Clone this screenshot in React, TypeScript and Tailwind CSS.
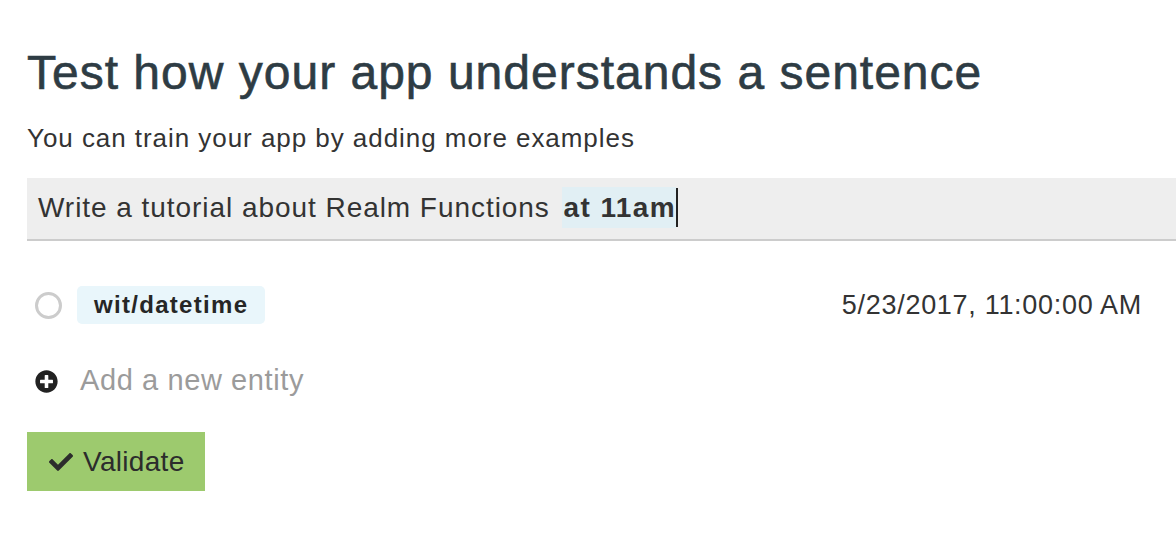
import React from "react";
import { FaCheck, FaPlusCircle } from "react-icons/fa";

export default function App() {
  return (
    <div
      className="w-[1176px] h-[534px] overflow-hidden bg-white pl-[27px] pt-[45px]"
      style={{ fontFamily: '"Liberation Sans", Arial, Helvetica, sans-serif' }}
    >
      <h1 className="text-[48px] leading-[56px] tracking-[1px] text-[#2e3c44] font-normal whitespace-nowrap [-webkit-text-stroke:0.6px_#2e3c44]">
        Test how your app understands a sentence
      </h1>
      <p className="mt-[22px] text-[26px] leading-[30px] tracking-[0.95px] text-[#333333] whitespace-nowrap">
        You can train your app by adding more examples
      </p>

      <div className="mt-[25px] h-[61px] box-content bg-[#eeeeee] border-b-2 border-[#cccccc] pl-[11px] flex items-start whitespace-nowrap">
        <div className="pt-[9px] flex items-start text-[28px] leading-[41px] text-[#333333]">
          <span className="tracking-[0.95px]">Write a tutorial about Realm Functions&nbsp;</span>
          <span className="inline-block ml-[3px] h-[41px] bg-[#e1eff4] pl-[2px] font-bold tracking-[1.4px]">at 11am</span>
          <span className="inline-block w-[2px] h-[39px] mt-[1px] bg-[#222222]" />
        </div>
      </div>

      <div className="mt-[45px] h-[38px] flex items-center pl-[8px] pr-[34px]">
        <div className="w-[27px] h-[27px] rounded-full border-[3px] border-[#cccccc]" />
        <div className="ml-[15px] h-[38px] px-[17px] rounded-[5px] bg-[#e9f6fb] flex items-center">
          <span className="text-[24px] font-bold tracking-[1.3px] text-[#262626]">wit/datetime</span>
        </div>
        <span className="ml-auto text-[27px] tracking-[0.7px] text-[#333333] whitespace-nowrap">
          5/23/2017, 11:00:00 AM
        </span>
      </div>

      <div className="mt-[42px] h-[30px] flex items-center pl-[8px]">
        <FaPlusCircle size={23} color="#222222" />
        <span className="ml-[22px] text-[29px] tracking-[0.6px] text-[#9b9b9b] whitespace-nowrap">
          Add a new entity
        </span>
      </div>

      <button className="mt-[36px] w-[178px] h-[59px] bg-[#9dca6e] flex items-center pl-[22px] text-[#2c2c2c]">
        <FaCheck size={24} />
        <span className="ml-[10px] text-[28px] tracking-[0.3px]">Validate</span>
      </button>
    </div>
  );
}
